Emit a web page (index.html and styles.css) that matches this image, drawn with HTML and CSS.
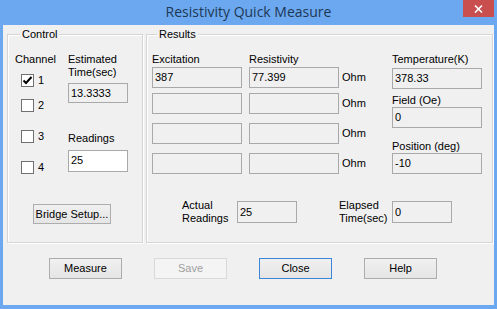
FILE: index.html
```html
<!DOCTYPE html>
<html>
  <head>
    <meta http-equiv="Content-Type" content="text/html; charset=utf-8">
    <title>Resistivity Quick Measure</title>
    <link rel="stylesheet" href="styles.css">
  </head>
  <body>
    <div class="window">
      <div class="titlebar">
        <span></span>
        <div class="title">Resistivity Quick Measure</div>
        <div class="title-right">
          <div class="close-btn">
            <svg width="9" height="8" viewBox="0 0 9 8"><path d="M1 0.5 L8 7.5 M8 0.5 L1 7.5" stroke="#fff" stroke-width="1.6"/></svg>
          </div>
        </div>
      </div>
      <div class="client">
        <div class="groups">
          <fieldset class="group control">
            <legend>Control</legend>
            <div class="control-cols">
              <div class="channels">
                <div class="lbl">Channel</div>
                <div class="check c1"><span class="box"><svg width="11" height="11" viewBox="0 0 11 11"><path d="M1.5 5.5 L4 8 L9.5 2" stroke="#000" stroke-width="2" fill="none"/></svg></span>1</div>
                <div class="check c2"><span class="box"></span>2</div>
                <div class="check c3"><span class="box"></span>3</div>
                <div class="check c4"><span class="box"></span>4</div>
              </div>
              <div class="estimates">
                <div class="lbl">Estimated<br>Time(sec)</div>
                <div class="field est">13.3333</div>
                <div class="lbl readings-lbl">Readings</div>
                <div class="field edit">25</div>
              </div>
            </div>
            <div class="btn bridge">Bridge Setup...</div>
          </fieldset>
          <fieldset class="group results">
            <legend>Results</legend>
            <div class="results-body">
              <div class="table">
                <div class="lbl">Excitation</div>
                <div class="lbl">Resistivity</div>
                <div></div>
                <div class="field">387</div>
                <div class="field">77.399</div>
                <div class="unit">Ohm</div>
                <div class="field"></div>
                <div class="field"></div>
                <div class="unit">Ohm</div>
                <div class="field"></div>
                <div class="field"></div>
                <div class="unit">Ohm</div>
                <div class="field"></div>
                <div class="field"></div>
                <div class="unit">Ohm</div>
              </div>
              <div class="side">
                <div class="lbl">Temperature(K)</div>
                <div class="field temp">378.33</div>
                <div class="lbl field-lbl">Field (Oe)</div>
                <div class="field">0</div>
                <div class="lbl pos-lbl">Position (deg)</div>
                <div class="field">-10</div>
              </div>
            </div>
            <div class="results-foot">
              <div class="lbl foot-lbl">Actual<br>Readings</div>
              <div class="field small">25</div>
              <div class="lbl foot-lbl elapsed">Elapsed<br>Time(sec)</div>
              <div class="field small">0</div>
            </div>
          </fieldset>
        </div>
        <div class="buttons">
          <div class="btn">Measure</div>
          <div class="btn disabled">Save</div>
          <div class="btn default">Close</div>
          <div class="btn">Help</div>
        </div>
      </div>
    </div>
  </body>
</html>
```

FILE: styles.css
```css
* {
  margin: 0;
  padding: 0;
  box-sizing: border-box;
}
html, body {
  width: 497px;
  height: 309px;
  overflow: hidden;
}
body {
  background: #6ca8ef;
  font-family: "Liberation Sans", Arial, sans-serif;
  font-size: 11px;
  line-height: 13px;
  color: #000;
}
.window {
  display: flex;
  flex-direction: column;
  height: 309px;
}
.titlebar {
  height: 25px;
  display: grid;
  grid-template-columns: 1fr auto 1fr;
}
.title {
  font-family: "Open Sans", "Noto Sans", sans-serif;
  font-size: 14px;
  line-height: 23px;
  color: #1d3855;
}
.title-right {
  display: flex;
  justify-content: flex-end;
  padding-right: 3px;
}
.close-btn {
  width: 31px;
  height: 17px;
  background: #c94f4f;
  display: flex;
  align-items: center;
  justify-content: center;
}
.client {
  margin: 0 3px;
  height: 280px;
  background: #f0f0f0;
}
.groups {
  display: flex;
  gap: 3px;
  height: 216px;
  margin: 2px 0 0 4px;
}
.group {
  border: 1px solid #d5d5d5;
  box-shadow: inset 1px 1px 0 #fff, 1px 1px 0 #fff;
  min-width: 0;
}
.group > legend {
  margin-left: 5px;
  padding: 0 2px;
  line-height: 14px;
  background: #f0f0f0;
}
.control {
  width: 136px;
  padding: 12px 0 0 7px;
}
.results {
  width: 347px;
  padding: 12px 0 0 5px;
}
.control-cols {
  display: flex;
}
.channels {
  width: 53px;
}
.check {
  display: flex;
  align-items: center;
  gap: 4px;
  height: 13px;
  padding-left: 6px;
}
.c1 { margin-top: 8px; }
.c2 { margin-top: 12px; }
.c3, .c4 { margin-top: 18px; }
.box {
  width: 13px;
  height: 13px;
  border: 1px solid #707070;
  background: #fff;
  display: flex;
  align-items: center;
  justify-content: center;
}
.field {
  width: 90px;
  height: 21px;
  border: 1px solid #a9a9a9;
  background: #f0f0f0;
  line-height: 19px;
  padding-left: 2px;
  white-space: nowrap;
}
.field.est {
  width: 60px;
  height: 20px;
  line-height: 18px;
  margin-top: 4px;
}
.readings-lbl {
  margin-top: 29px;
}
.field.edit {
  width: 60px;
  height: 22px;
  line-height: 18px;
  margin-top: 5px;
  background: #fff;
}
.btn {
  width: 73px;
  height: 21px;
  border: 1px solid #adadad;
  background: linear-gradient(#f0f0f0, #e5e5e5);
  text-align: center;
  line-height: 19px;
}
.btn.bridge {
  width: 78px;
  height: 20px;
  line-height: 18px;
  margin: 30px 0 0 18px;
}
.btn.disabled {
  border-color: #d9d9d9;
  background: #f4f4f4;
  color: #a0a0a0;
}
.btn.default {
  border-color: #3c86d6;
}
.results-body {
  display: flex;
}
.table {
  display: grid;
  grid-template-columns: 97px 93px 50px;
  grid-template-rows: 14px 26px 30px 30px 21px;
  align-items: start;
}
.unit {
  line-height: 21px;
}
.side {
  width: 90px;
}
.field.temp {
  margin-top: 2px;
}
.field-lbl {
  margin-top: 5px;
}
.pos-lbl {
  margin-top: 12px;
}
.results-foot {
  display: flex;
  align-items: center;
  margin-top: 25px;
  padding-left: 30px;
}
.foot-lbl {
  width: 55px;
}
.foot-lbl.elapsed {
  width: 53px;
  margin-left: 42px;
}
.field.small {
  width: 60px;
  height: 22px;
  line-height: 20px;
}
.buttons {
  display: flex;
  gap: 32px;
  margin-top: 15px;
  padding-left: 46px;
}
```
